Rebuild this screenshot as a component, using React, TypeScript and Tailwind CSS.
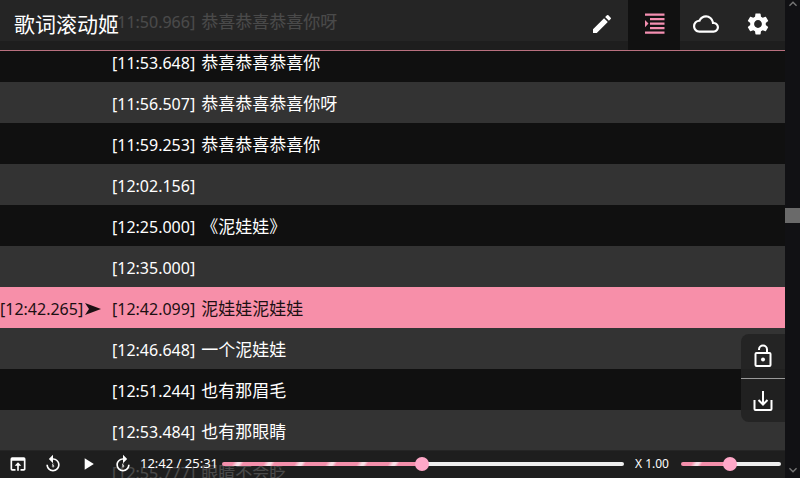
import { useState } from "react";
import {
  MdCloudQueue,
  MdEdit,
  MdForward5,
  MdKeyboardArrowDown,
  MdKeyboardArrowUp,
  MdOpenInBrowser,
  MdPlayArrow,
  MdReplay5,
  MdSettings,
} from "react-icons/md";

type Line = {
  time: string;
  text: string;
};

const lines: Line[] = [
  { time: "11:50.966", text: "恭喜恭喜恭喜你呀" },
  { time: "11:53.648", text: "恭喜恭喜恭喜你" },
  { time: "11:56.507", text: "恭喜恭喜恭喜你呀" },
  { time: "11:59.253", text: "恭喜恭喜恭喜你" },
  { time: "12:02.156", text: "" },
  { time: "12:25.000", text: "《泥娃娃》" },
  { time: "12:35.000", text: "" },
  { time: "12:42.099", text: "泥娃娃泥娃娃" },
  { time: "12:46.648", text: "一个泥娃娃" },
  { time: "12:51.244", text: "也有那眉毛" },
  { time: "12:53.484", text: "也有那眼睛" },
  { time: "12:55.777", text: "眼睛不会眨" },
];

function IndentIcon() {
  return (
    <svg viewBox="0 0 24 24" className="size-6" fill="currentColor" aria-hidden="true">
      <path d="M3 1.500h19.500v2.200H3zM8 6h14.500v2.200H8zM8 10.500h14.500v2.200H8zM8 15h14.500v2.200H8zM3 19.500h19.500v2.200H3zM3 8l3.500 3.600L3 15.200z" />
    </svg>
  );
}

function LockOpenIcon() {
  return (
    <svg viewBox="0 0 24 24" className="size-6" fill="none" stroke="currentColor" strokeWidth="2" aria-hidden="true">
      <rect x="4.500" y="9" width="15" height="13" rx="1" />
      <path d="M8 6V5.500a4 4 0 0 1 8 0V9" />
      <circle cx="12" cy="15.500" r="2" fill="currentColor" stroke="none" />
    </svg>
  );
}

function DownloadIcon() {
  return (
    <svg viewBox="0 0 24 24" className="size-6" fill="none" stroke="currentColor" strokeWidth="2" aria-hidden="true">
      <path d="M3.500 11v9a1 1 0 0 0 1 1h15a1 1 0 0 0 1-1v-9M12 2v13M7.500 11l4.500 4.500 4.500-4.500" />
    </svg>
  );
}

const tabs = [
  { id: "edit", label: "编辑", icon: <MdEdit className="size-6" /> },
  { id: "sync", label: "打轴", icon: <IndentIcon /> },
  { id: "cloud", label: "云端", icon: <MdCloudQueue className="size-[26px]" /> },
  { id: "settings", label: "设置", icon: <MdSettings className="size-[26px]" /> },
];

function Slider(props: {
  label: string;
  max: number;
  value: number;
  onChange: (value: number) => void;
  className: string;
}) {
  const { label, max, value, onChange, className } = props;
  return (
    <input
      type="range"
      aria-label={label}
      min={0}
      max={max}
      step="any"
      value={value}
      onChange={(e) => onChange(Number(e.target.value))}
      style={{ backgroundSize: `${(value / max) * 100}% 100%` }}
      className={`h-1 appearance-none rounded-full bg-[#eeeeee] bg-[repeating-linear-gradient(120deg,#f48fab_0px,#f48fab_10px,#f9dfe6_14px,#f9dfe6_16px,#f48fab_19px,#f48fab_27px)] bg-no-repeat [&::-webkit-slider-thumb]:size-3.5 [&::-webkit-slider-thumb]:appearance-none [&::-webkit-slider-thumb]:rounded-full [&::-webkit-slider-thumb]:bg-[#ffa8c8] ${className}`}
    />
  );
}

export default function App() {
  const [tab, setTab] = useState("sync");
  const [current, setCurrent] = useState(7);
  const [position, setPosition] = useState(762);
  const [speed, setSpeed] = useState(0.98);

  return (
    <div className="flex h-screen bg-[#111111] font-['Noto_Sans','Noto_Sans_CJK_SC',sans-serif] text-white">
      <div className="relative h-full min-w-0 flex-1 overflow-hidden">
        <ol>
          {lines.map((line, i) => (
            <li
              key={line.time}
              onClick={() => setCurrent(i)}
              className={`flex h-[41px] items-center whitespace-pre pt-0.5 ${
                i === current ? "bg-[#f78fa9] text-[#1c1013]" : i % 2 ? "bg-[#101010]" : "bg-[#333333]"
              }`}
            >
              <span className="flex w-28 items-center gap-0.5 text-base">
                {i === current && (
                  <>
                    [12:42.265]
                    <svg viewBox="0 0 16 12" className="h-3 w-4" fill="currentColor" aria-hidden="true">
                      <path d="M0 0l16 6-16 6 4-6z" />
                    </svg>
                  </>
                )}
              </span>
              <span className="text-base">[{line.time}]</span>
              <span className="ml-1.5 text-[17px]">{line.text}</span>
            </li>
          ))}
        </ol>

        <header className="absolute inset-x-0 top-0 flex h-[51px] items-stretch border-b border-[#b9707f] bg-[#222222]/82 pr-px">
          <h1 className="flex flex-1 items-center pl-3.5 text-[21px]">歌词滚动姬</h1>
          <nav className="flex">
            {tabs.map((t) => (
              <a
                key={t.id}
                href={`#${t.id}`}
                aria-label={t.label}
                onClick={() => setTab(t.id)}
                className={`flex w-[52px] items-center justify-center pb-0.5 ${
                  t.id === tab ? "bg-[#111111] text-[#f48fb1]" : ""
                }`}
              >
                {t.icon}
              </a>
            ))}
          </nav>
        </header>

        <div className="absolute right-0 bottom-14 flex w-11 flex-col divide-y divide-[#999999] overflow-hidden rounded-l-lg bg-[#222222]/90">
          <button aria-label="锁定" className="flex h-[45px] items-center justify-center">
            <LockOpenIcon />
          </button>
          <button aria-label="下载" className="flex h-[43px] items-center justify-center">
            <DownloadIcon />
          </button>
        </div>

        <footer className="absolute inset-x-0 bottom-0 flex h-7 items-center bg-[#222222]/82 pr-1 text-xs">
          <button aria-label="打开" className="flex w-[35px] justify-center">
            <MdOpenInBrowser className="size-5" />
          </button>
          <button aria-label="后退5秒" className="flex w-[35px] justify-center">
            <MdReplay5 className="size-5" />
          </button>
          <button aria-label="播放" className="flex w-[35px] justify-center">
            <MdPlayArrow className="size-5" />
          </button>
          <button aria-label="前进5秒" className="flex w-[35px] justify-center">
            <MdForward5 className="size-5" />
          </button>
          <span className="w-[82px] whitespace-nowrap text-[13px]">12:42 / 25:31</span>
          <Slider label="进度" max={1531} value={position} onChange={setPosition} className="min-w-0 flex-1" />
          <span className="w-[57px] whitespace-nowrap pl-[11px]">X 1.00</span>
          <Slider label="速度" max={2} value={speed} onChange={setSpeed} className="w-[100px]" />
        </footer>
      </div>

      <div className="flex w-[15px] flex-col items-center overflow-hidden bg-[#111114] text-[#777777]">
        <MdKeyboardArrowUp className="-mt-1 size-4 shrink-0" />
        <div className="grow-[196]" />
        <div className="h-[15px] w-full bg-[#6a6a6a]" />
        <div className="grow-[239]" />
        <MdKeyboardArrowDown className="size-4 shrink-0" />
      </div>
    </div>
  );
}
